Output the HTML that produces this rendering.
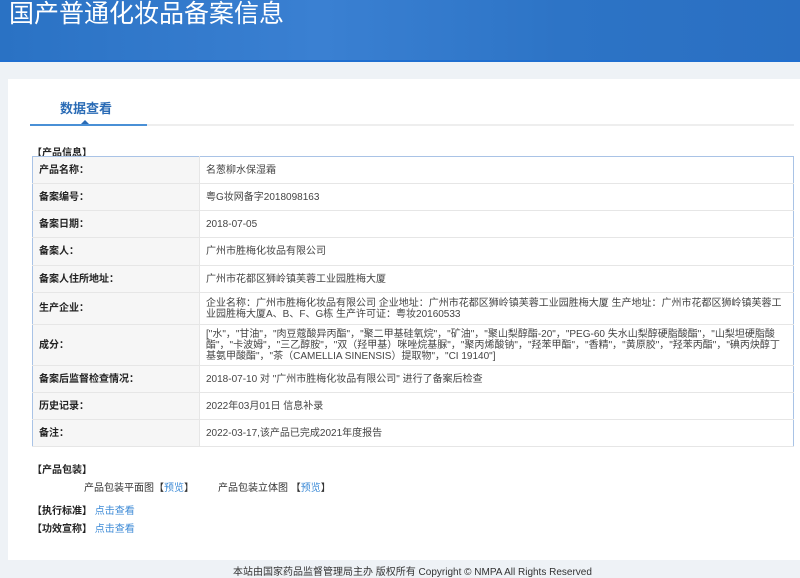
<!DOCTYPE html>
<html><head><meta charset="utf-8"><style>
body{margin:0;width:800px;height:574px;overflow:hidden;background:#eef2f6;font-family:"Liberation Sans","Noto Sans CJK SC",sans-serif;position:relative}
.hdr{position:absolute;left:0;top:0;width:800px;height:60px;background:linear-gradient(90deg,#2a72c4,#3a80d2 40%,#2d74c6 70%,#2a6fc2);border-bottom:2px solid #1f6fd0}
.hdr h1{margin:0;position:absolute;left:9px;top:-6px;color:#fff;font-weight:normal;font-size:25px;letter-spacing:0}
.card{position:absolute;left:8px;top:79px;width:800px;height:481px;background:#fff}
.tab{position:absolute;left:60px;top:98px;font-size:13px;color:#2a6bb5;font-weight:bold}
.line{position:absolute;left:30px;top:124px;width:764px;height:2px;background:#eee}
.line b{position:absolute;left:0;top:0;width:117px;height:2px;background:#4a90d6}
.tri{position:absolute;left:81px;top:120px;width:0;height:0;border-left:4px solid transparent;border-right:4px solid transparent;border-bottom:4px solid #2a6bb5}
.sec{position:absolute;font-size:10px;font-weight:bold;color:#222}
table{position:absolute;left:32px;top:156px;width:762px;border-collapse:collapse;border:1px solid #a9c3e6;font-size:10px;color:#444}
td{border-bottom:1px solid #e6e6e6;padding:0 6px;line-height:11px}
td.l{width:154px;background:#f6f6f6;font-weight:bold;color:#222;border-right:1px solid #e6e6e6}
.t{position:absolute;font-size:10px;color:#333}
a{color:#3c8ad6;text-decoration:none}
.foot{position:absolute;left:233px;top:563px;font-size:10px;color:#333}
</style></head><body>
<div class="hdr"><h1>国产普通化妆品备案信息</h1></div>
<div class="card"></div>
<div class="tab">数据查看</div>
<div class="line"><b></b></div><div class="tri"></div>
<div class="sec" style="left:32px;top:144px">【产品信息】</div>
<table>
<tr style="height:27px"><td class="l">产品名称：</td><td>名葱柳水保湿霜</td></tr>
<tr style="height:27px"><td class="l">备案编号：</td><td>粤G妆网备字2018098163</td></tr>
<tr style="height:27px"><td class="l">备案日期：</td><td>2018-07-05</td></tr>
<tr style="height:28px"><td class="l">备案人：</td><td>广州市胜梅化妆品有限公司</td></tr>
<tr style="height:27px"><td class="l">备案人住所地址：</td><td>广州市花都区狮岭镇芙蓉工业园胜梅大厦</td></tr>
<tr style="height:32px"><td class="l">生产企业：</td><td>企业名称：广州市胜梅化妆品有限公司 企业地址：广州市花都区狮岭镇芙蓉工业园胜梅大厦 生产地址：广州市花都区狮岭镇芙蓉工业园胜梅大厦A、B、F、G栋 生产许可证：粤妆20160533</td></tr>
<tr style="height:41px"><td class="l">成分：</td><td>["水"，"甘油"，"肉豆蔻酸异丙酯"，"聚二甲基硅氧烷"，"矿油"，"聚山梨醇酯-20"，"PEG-60 失水山梨醇硬脂酸酯"，"山梨坦硬脂酸酯"，"卡波姆"，"三乙醇胺"，"双（羟甲基）咪唑烷基脲"，"聚丙烯酸钠"，"羟苯甲酯"，"香精"，"黄原胶"，"羟苯丙酯"，"碘丙炔醇丁基氨甲酸酯"，"茶（CAMELLIA SINENSIS）提取物"，"CI 19140"]</td></tr>
<tr style="height:27px"><td class="l">备案后监督检查情况：</td><td>2018-07-10 对 "广州市胜梅化妆品有限公司" 进行了备案后检查</td></tr>
<tr style="height:27px"><td class="l">历史记录：</td><td>2022年03月01日 信息补录</td></tr>
<tr style="height:27px"><td class="l">备注：</td><td>2022-03-17,该产品已完成2021年度报告</td></tr>
</table>
<div class="sec" style="left:32px;top:461px">【产品包装】</div>
<div class="t" style="left:84px;top:479px">产品包装平面图【<a>预览</a>】</div>
<div class="t" style="left:218px;top:479px">产品包装立体图 【<a>预览</a>】</div>
<div class="sec" style="left:32px;top:502px">【执行标准】 <a style="font-weight:normal">点击查看</a></div>
<div class="sec" style="left:32px;top:520px">【功效宣称】 <a style="font-weight:normal">点击查看</a></div>
<div class="foot">本站由国家药品监督管理局主办 版权所有 Copyright © NMPA All Rights Reserved</div>
</body></html>
